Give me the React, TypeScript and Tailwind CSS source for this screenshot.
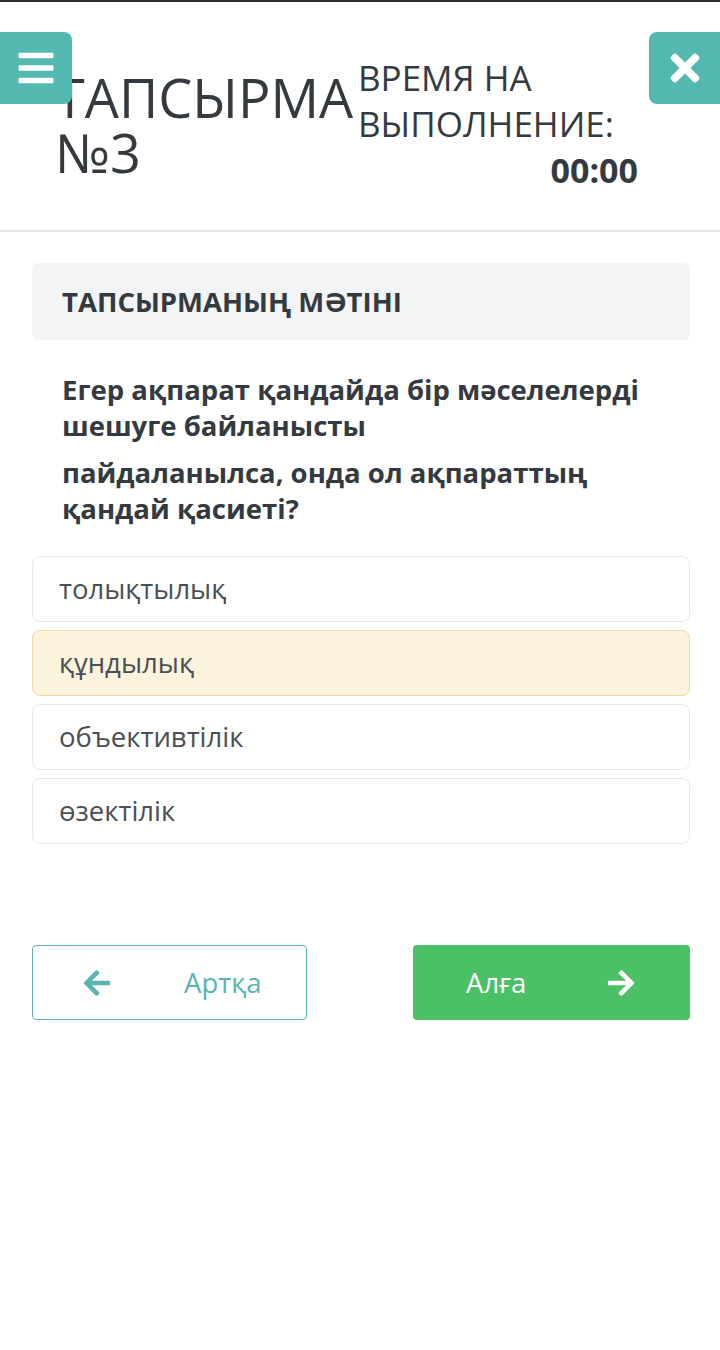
import { FaArrowLeft, FaArrowRight, FaBars, FaTimes } from "react-icons/fa";

const options = ["толықтылық", "құндылық", "объективтілік", "өзектілік"];
const selected = 1;

export default function App() {
  return (
    <div className="min-h-[1350px] bg-white font-['Open_Sans',sans-serif] text-[#343a40]">
      <div className="h-[2px] bg-[#2b2b2b]" />

      {/* header */}
      <header className="relative h-[230px] border-b-2 border-[#e4e6e8]">
        <button className="absolute left-0 top-[30px] flex h-[72px] w-[72px] items-center justify-center rounded-r-lg bg-[#52b8b0] text-white">
          <FaBars size={40} />
        </button>
        <button className="absolute right-0 top-[30px] flex h-[72px] w-[71px] items-center justify-center rounded-l-lg bg-[#52b8b0] text-white">
          <FaTimes size={42} />
        </button>

        <div className="flex items-start pl-[55px] pt-[53px]">
          <h1 className="mt-[15px] w-[303px] text-[54px] leading-[55px] font-normal">
            ТАПСЫРМА
            <br />
            №3
          </h1>
          <div className="w-[280px] text-[35px] leading-[46px]">
            <div>ВРЕМЯ НА</div>
            <div>ВЫПОЛНЕНИЕ:</div>
            <div className="text-right text-[34px] font-bold">00:00</div>
          </div>
        </div>
      </header>

      <main className="pl-[32px] pr-[30px] pt-[31px]">
        <div className="flex h-[77px] items-center rounded-md bg-[#f2f4f6] pl-[30px] text-[27.5px] font-bold">
          ТАПСЫРМАНЫҢ МӘТІНІ
        </div>

        <div className="mt-[32px] px-[30px] text-[27.5px] leading-[36px] font-bold">
          <p>Егер ақпарат қандайда бір мәселелерді шешуге байланысты</p>
          <p className="mt-[11px]">пайдаланылса, онда ол ақпараттың қандай қасиеті?</p>
        </div>

        <div className="mt-[29px] flex flex-col gap-[8px]">
          {options.map((o, i) => (
            <div
              key={o}
              className={`flex h-[66px] items-center rounded-lg border pl-[26px] text-[27.5px] text-[#4a4f55] ${
                i === selected ? "border-[#eed9a4] bg-[#fcf3dd]" : "border-[#e6eaed] bg-white"
              }`}
            >
              {o}
            </div>
          ))}
        </div>

        <div className="mt-[101px] flex justify-between">
          <button className="flex h-[75px] w-[275px] items-center rounded border border-[#5ab5ae] pl-[49px] text-[27.5px] text-[#5ab5ae]">
            <FaArrowLeft size={30} />
            <span className="ml-[72px]">Артқа</span>
          </button>
          <button className="flex h-[75px] w-[277px] items-center justify-between rounded bg-[#4cc066] pl-[53px] pr-[54px] text-[27.5px] text-white">
            <span>Алға</span>
            <FaArrowRight size={30} />
          </button>
        </div>
      </main>
    </div>
  );
}
